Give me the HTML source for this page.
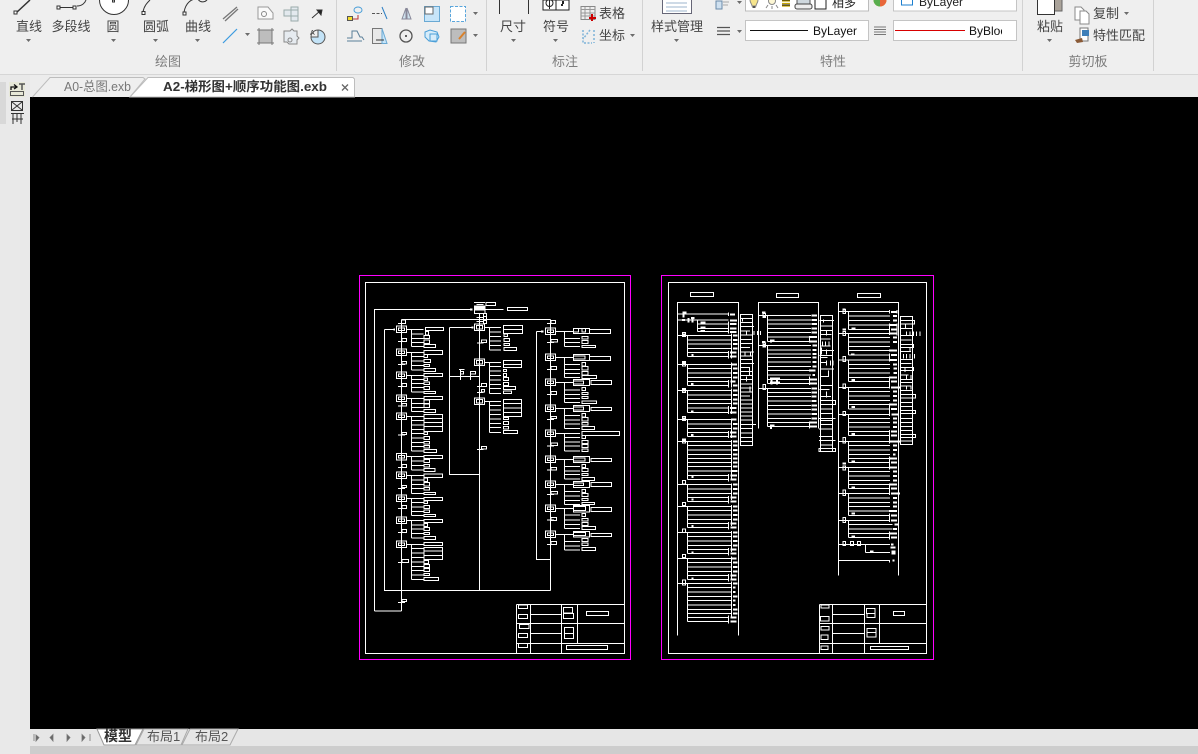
<!DOCTYPE html>
<html><head><meta charset="utf-8"><style>
html,body{margin:0;padding:0;width:1198px;height:754px;overflow:hidden;background:#efefef}
svg{position:absolute;left:0;top:0;display:block}
text{font-family:"Liberation Sans","Noto Sans CJK SC",sans-serif;font-size:13px;fill:#444}
.g{fill:#7d7d7d;text-anchor:middle}.m{text-anchor:middle}
.w path{fill:none;stroke:#fff;stroke-width:3;shape-rendering:crispEdges}
.w path.t{stroke-width:6}
</style></head><body>
<svg width="1198" height="754" viewBox="0 0 1198 754">
<rect width="1198" height="754" fill="#efefef"/>
<rect y="74" width="1198" height="1" fill="#d6d6d6"/>
<rect y="75" width="1198" height="22" fill="#ececec"/>
<rect x="0" y="75" width="30" height="679" fill="#e9e9e9"/>
<rect x="0" y="82" width="6" height="42" fill="#d8d8d8"/>
<rect x="30" y="97" width="1168" height="632" fill="#000"/>
<rect x="30" y="729" width="1168" height="17" fill="#e6e6e6"/>
<rect x="30" y="746" width="1168" height="8" fill="#cdcdcd"/>
<!-- separators -->
<path d="M336.5 0V71M486.5 0V71M642.5 0V71M1022.5 0V71M1153.5 0V71" stroke="#d2d2d2" fill="none"/>
<!-- ribbon labels -->
<text class="m" x="29" y="31">直线</text><text class="m" x="71" y="31">多段线</text><text class="m" x="113" y="31">圆</text><text class="m" x="156" y="31">圆弧</text><text class="m" x="198" y="31">曲线</text>
<text class="g" x="168" y="66">绘图</text><text class="g" x="412" y="66">修改</text><text class="g" x="565" y="66">标注</text><text class="g" x="833" y="66">特性</text><text class="g" x="1088" y="66">剪切板</text>
<text class="m" x="513" y="31">尺寸</text><text class="m" x="556" y="31">符号</text><text class="m" x="612" y="18">表格</text><text class="m" x="612" y="40">坐标</text>
<text class="m" x="677" y="31">样式管理</text><text class="m" x="1050" y="31">粘贴</text><text class="m" x="1106" y="18">复制</text><text class="m" x="1119" y="40">特性匹配</text>
<!-- dropdown arrows -->
<path fill="#555" d="M26 39h5l-2.500 3zM111 39h5l-2.500 3zM153 39h5l-2.500 3zM195 39h5l-2.500 3zM245 33h5l-2.500 3zM473 12h5l-2.500 3zM473 34h5l-2.500 3zM511 39h5l-2.500 3zM553 39h5l-2.500 3zM630 34h5l-2.500 3zM674 39h5l-2.500 3zM737 30h5l-2.500 3zM737 1h5l-2.500 3zM858 30h5l-2.500 3zM858 0h5l-2.500 3zM1006 30h5l-2.500 3zM1006 0h5l-2.500 3zM1047 39h5l-2.500 3zM1124 12h5l-2.500 3z" opacity=".85"/>
<!-- draw icons -->
<g fill="none" stroke="#333" stroke-width="1">
<path d="M16 13L30 0" stroke-width="1.500"/><rect x="14" y="11" width="3" height="3" fill="#fff"/>
<path d="M60 7.500H74M77 6C82 6 85 3 86 0"/><rect x="57" y="6" width="3" height="3" fill="#fff"/><rect x="73" y="6" width="3" height="3" fill="#fff"/>
<circle cx="114" cy="0" r="14.500" fill="#fff"/><rect x="112.500" y="0" width="2" height="2"/>
<path d="M143 12C144 6 147 3 150 0"/><rect x="142" y="11.500" width="3" height="3" fill="#fff"/>
<path d="M184 12C186 2 192 -1 196 -1M198 -1C200 3 206 3 208 -2"/><rect x="183" y="12" width="3" height="3" fill="#fff"/>
<path d="M223 19L237 7M225 21L238 9" stroke="#777" stroke-width="1.300"/>
<path d="M223 43L237 29" stroke="#3b9ae0" stroke-width="1.200"/>
<path d="M258 7H268L273 13V19H258Z" stroke="#999" fill="#fafafa"/><circle cx="264" cy="14" r="2.500" stroke="#888"/>
<path d="M284 10H298V16H284ZM291 7H298V21H291Z" stroke="#9aa" fill="#e3e9ee"/>
<path d="M312 18L320 11" stroke="#333"/><path d="M317 10L322 10L321 15Z" fill="#222"/>
<rect x="259" y="30" width="13" height="13" fill="#bdbdbd" stroke="#777"/><path d="M257 30H274M257 43H274M259 28V45M272 28V45" stroke="#777"/>
<path d="M284 31h6l2-2 2 2h3v5l2 2-2 2v4h-8l-2-2-3 0z" stroke="#888" fill="#e6ebf0"/><circle cx="290" cy="40" r="2" stroke="#888"/>
<path d="M318 30A7 7 0 1 1 311 37" stroke="#555" fill="#c3e3f7"/><path d="M311 37A7 7 0 0 1 318 30V37Z" fill="#efefef" stroke="#555"/>
</g>
<text x="310" y="35" style="font-size:7px">A</text>
<!-- modify icons -->
<g fill="none" stroke-width="1">
<rect x="347.500" y="16.500" width="5" height="4" fill="#f4dc2c" stroke="#555"/><ellipse cx="358" cy="10" rx="4" ry="3" stroke="#4b9fd8"/><path d="M353 19H358V15" stroke="#b33"/>
<path d="M372 13.500H382" stroke="#555" stroke-dasharray="3 1.500"/><path d="M382 7L387 19" stroke="#2d7fc4"/>
<path d="M402 19L406 8V19ZM407 8L411 19H407Z" stroke="#889" fill="#cfe2ee"/>
<rect x="424.500" y="6.500" width="15" height="15" stroke="#6aa9d3" fill="#c7e5f9"/><rect x="425" y="7" width="8" height="7" fill="#fff" stroke="#666"/>
<rect x="450.500" y="6.500" width="15" height="15" stroke="#5aa6dc" fill="#fff" stroke-dasharray="3 1.500"/>
<path d="M347 41H362M347 38H352V31H357L360 37H362L364 40" stroke="#5a7f99"/>
<path d="M372.500 28.500H382V43.500H372.500Z" stroke="#777" fill="#e8e8e8"/><path d="M382 28.500L387 43.500H382Z" stroke="#6aa9d3" fill="#c7e5f9"/><path d="M376 40H384" stroke="#333"/>
<circle cx="406" cy="36" r="6" stroke="#555" stroke-width="1.300"/><circle cx="406" cy="36" r="1" fill="#333"/>
<path d="M425 32L430 30L437 32L439 37L436 42L429 41L425 37Z" stroke="#4b9fd8" fill="#d6ecfa"/><rect x="430" y="34" width="7" height="7" stroke="#4b9fd8"/>
<rect x="451" y="29" width="15" height="14" fill="#bdbdbd" stroke="#777"/><path d="M459 39L465 32" stroke="#d9812b" stroke-width="2"/>
<!-- dim -->
<path d="M499.500 0V14M528.500 0V14" stroke="#333"/>
<rect x="543" y="0" width="13" height="10" stroke="#222" fill="#fff"/><circle cx="549.500" cy="3" r="3.500" stroke="#222"/><path d="M549.500 0V9" stroke="#222"/>
<rect x="556" y="0" width="13" height="10" stroke="#222" fill="#fff"/><path d="M561 5h2M563 1v3" stroke="#222" stroke-width="2"/>
<rect x="581" y="6.500" width="14" height="13" fill="#eee" stroke="#888"/><path d="M581 9.500H595M581 13H595M581 16H595M585 7V19M590 7V19" stroke="#999"/><path d="M592 14V21M589 18H596" stroke="#c00" stroke-width="2"/>
<path d="M583 30V43H592M590 30L583 39" stroke="#7fb3d8" stroke-dasharray="2 1.500" stroke-width="1.500"/><path d="M594 30V43" stroke="#7fb3d8" stroke-dasharray="2 2" stroke-width="1.500"/>
<!-- style -->
<rect x="662.500" y="-2" width="29" height="15.500" stroke="#667" fill="#fff"/><path d="M666 3H687M666 7H687M666 11H687" stroke="#9db4cc"/>
<!-- props -->
<rect x="716" y="1" width="6" height="8" stroke="#6a8aa8" fill="#cfe0ef"/><path d="M723 2H729M723 5H728" stroke="#aaa"/>
<rect x="745.500" y="-2" width="123" height="13" fill="#fff" stroke="#bcbcbc"/>
<path d="M750 0A4 4 0 0 1 758 0C758 3 756 4 756 6H752C752 4 750 3 750 0Z" stroke="#888" fill="#f6e58d"/><rect x="752.500" y="6" width="3" height="2" fill="#555"/>
<circle cx="772" cy="1" r="3.500" stroke="#888" fill="#fdf7d4"/><path d="M766 8L768 5M778 8L776 5M772 6V9" stroke="#888"/>
<path d="M782 1H790M782 3.500H790M782 6H790" stroke="#c7a600" stroke-width="1.300"/><path d="M782 0H790M782 5H790" stroke="#111"/>
<rect x="797" y="-1" width="13" height="7" stroke="#555" fill="#cfd8de"/><rect x="795" y="4" width="17" height="5" rx="2" stroke="#444" fill="#eee"/>
<rect x="815" y="-2" width="11" height="11" stroke="#222" fill="#fff"/>
<path d="M717 27.500H730M717 31H730M717 34.500H730" stroke="#555" stroke-width="1.200"/>
<rect x="745.500" y="20.500" width="123" height="20" fill="#fff" stroke="#c4c4c4"/><path d="M750 30.500H808" stroke="#111"/>
<path d="M874 27H886M874 29.500H886M874 32H886M874 34.500H886" stroke="#777"/>
<rect x="893.500" y="-2" width="123" height="13" fill="#fff" stroke="#c4c4c4"/><rect x="901.500" y="-1" width="11" height="6" stroke="#1c7fcf"/>
<rect x="893.500" y="20.500" width="123" height="20" fill="#fff" stroke="#c4c4c4"/><path d="M895 30.500H965" stroke="#d80000"/>
<circle cx="880" cy="0" r="6.500" fill="#e8c52a"/><path d="M880 0H873.500A6.500 6.500 0 0 0 880 6.500Z" fill="#58ad4d"/><path d="M880 0V6.500A6.500 6.500 0 0 0 886.500 0Z" fill="#e8663a"/>
<!-- clipboard -->
<rect x="1054" y="-2" width="8" height="13" fill="#aaa39a" stroke="#666"/><rect x="1037.500" y="-2" width="17" height="16.500" fill="#fff" stroke="#333"/>
<path d="M1075 7H1081L1084 10V20H1075Z" stroke="#888" fill="#fff"/><path d="M1080 11H1086L1089 14V24H1080Z" stroke="#888" fill="#fff"/>
<rect x="1080" y="28" width="8" height="13" fill="#fff" stroke="#777"/><rect x="1082" y="30" width="7" height="6" fill="#3f7fb8"/><path d="M1075 40L1082 38L1083 42L1077 43Z" fill="#8a5a36"/>
</g>
<text x="813" y="35" style="font-size:12px;fill:#111">ByLayer</text>
<svg x="968" y="22" width="34" height="18"><text x="1" y="13" style="font-size:12px;fill:#111">ByBlock</text></svg>
<text x="919" y="6" style="font-size:12px;fill:#222">ByLayer</text>
<text x="832" y="7" style="font-size:12px;fill:#222">相多</text>
<!-- doc tabs -->
<path d="M32.500 97L50 77.500H143L145 79L130 97" fill="#efefef" stroke="#bdbdbd"/>
<path d="M130 97L148 77.500H353L354.500 79V97Z" fill="#fff" stroke="#bdbdbd"/>
<text x="64" y="91" textLength="67" lengthAdjust="spacingAndGlyphs" style="fill:#777">A0-总图.exb</text>
<text x="163" y="91" textLength="164" lengthAdjust="spacingAndGlyphs" style="fill:#333;font-weight:bold">A2-梯形图+顺序功能图.exb</text>
<path d="M342 84.500L348 90.500M348 84.500L342 90.500" stroke="#666" stroke-width="1.300"/>
<!-- sidebar -->
<g fill="none" stroke="#333" stroke-width="1">
<rect x="9" y="82" width="16" height="15" fill="#e7e8d8" stroke="none"/>
<path d="M11 90V87H16M14 84.500L17 87L14 89" stroke="#111" stroke-width="1.300"/><path d="M19 84H25M22 84V90" stroke="#555" stroke-width="1.500"/><rect x="10.500" y="91.500" width="13" height="4" stroke="#555"/>
<rect x="11.500" y="101.500" width="11" height="9"/><path d="M12 110L22 102M12 102L22 110"/>
<path d="M11 113.500H24M13 114V124M17 114V122M21 114V124M12 119H23"/>
</g>
<!-- bottom tabs -->
<path d="M34 734V741M39 737.500L36 735V741ZM53 734.500L50 737.500L53 741ZM67 734.500L70 737.500L67 741ZM82 734.500L85 737.500L82 741ZM90 734V741" fill="#666" stroke="#777" stroke-width=".8"/>
<path d="M97 729L104 745H135L143 729Z" fill="#fff" stroke="#999"/>
<path d="M136 745L144 729H188L181 745ZM182 745L190 729H238L230 745Z" fill="#e6e6e6" stroke="#aaa"/>
<text x="104" y="741" style="font-size:14px;font-weight:bold;fill:#333">模型</text>
<text x="147" y="741" style="fill:#555">布局1</text><text x="195" y="741" style="fill:#555">布局2</text>
<!-- LEFT SHEET -->
<g class="w" transform="translate(355 270) scale(.33333)">
<path d="M13 16H827V1168H13Z" style="stroke:#f0f" />
<path d="M31 38H808V1151H31Z"/>
<path d="M58 1023V118H345M58 1023H140M88 178V961H586M140 148V1023M140 148H586M373 130V961M586 148V961M283 172V613H373M283 172H350M283 320H373M544 184V868H586M544 184H560M88 178H115M390 118H445M357 97H390M365 104H385M365 130H385M365 142H385M365 155H385"/>
<path d="M393 97H422V107H393ZM457 112H518V122H457ZM385 130H395V140H385ZM385 140H395V150H385ZM385 152H395V160H385ZM312 298H329M316 300V330M316 304H326V312H316ZM346 304V330M346 304H362V312H346Z"/>
<path class="t" d="M345 119H352M115 178H120M349 172H356M558 184H566M358 118H388M358 112H388"/>
<path d="M358 108H390V130H358Z"/>
<!-- left steps -->
<path d="M124 168H155V188H124ZM131 174H149V182H131ZM124 237H155V257H124ZM131 243H149V251H131ZM124 306H155V326H124ZM131 312H149V320H131ZM124 375H155V395H124ZM131 381H149V389H131ZM124 429H155V449H124ZM131 435H149V443H131ZM124 550H155V570H124ZM131 556H149V564H131ZM124 606H155V626H124ZM131 612H149V620H131ZM124 675H155V695H124ZM131 681H149V689H131ZM124 741H155V761H124ZM131 747H149V755H131ZM124 813H155V833H124ZM131 819H149V827H131Z"/>
<path d="M129 160H150M140 150H152V160H140ZM129 214H150M141 206H155V215H141ZM129 283H150M141 274H155V282H141ZM129 349H150M141 340H155V350H141ZM129 408H150M141 400H155V408H141ZM129 495H150M141 487H155V494H141ZM129 592H150M141 583H155V593H141ZM129 655H150M141 646H155V653H141ZM129 715H150M141 706H155V716H141ZM129 787H150M141 778H155V788H141ZM129 877H150M141 868H161V878H141ZM129 997H150M141 988H155V995H141Z"/>
<!-- left rungs -->
<path d="M155 178H205M169 178V230M169 192H205M169 205H205M169 218H205M169 230H205M211 172H266V182H211ZM211 185H220V195H211ZM207 196H224V206H207ZM207 210H224V220H207ZM207 224H242V233H207Z"/>
<path d="M155 247H205M169 247V300M169 260H205M169 273H205M169 287H205M169 300H205M207 241H263V254H207ZM207 254H218V263H207ZM207 268H227V277H207ZM207 283H224V290H207ZM207 295H242V304H207Z"/>
<path d="M155 316H205M169 316V366M169 328H205M169 340H205M169 353H205M169 366H205M207 310H263V320H207ZM207 324H218V332H207ZM207 336H224V344H207ZM207 349H224V359H207ZM207 364H242V371H207Z"/>
<path d="M155 385H205M169 385V425M169 400H205M169 413H205M169 425H205M207 379H263V389H207ZM207 390H224V400H207ZM207 402H224V413H207ZM207 418H242V428H207Z"/>
<path d="M155 439H205M169 439V543M169 452H205M169 465H205M169 478H205M169 490H205M169 504H205M169 517H205M169 530H205M169 543H205M207 433H263V485H207ZM207 445H263M207 458H263M207 470H263M207 486H218V494H207ZM207 499H224V509H207ZM207 514H224V522H207ZM207 526H224V534H207ZM207 538H245V548H207Z"/>
<path d="M155 560H205M169 560V600M169 573H205M169 587H205M169 600H205M207 556H263V566H207ZM207 569H224V577H207ZM207 583H224V591H207ZM207 595H240V605H207Z"/>
<path d="M155 616H205M169 616V670M169 630H205M169 643H205M169 656H205M169 670H205M207 612H263V623H207ZM207 624H218V635H207ZM207 637H224V648H207ZM207 652H224V660H207ZM207 667H242V674H207Z"/>
<path d="M155 685H205M169 685V737M169 697H205M169 711H205M169 724H205M169 737H205M207 682H263V692H207ZM207 693H218V701H207ZM207 706H224V716H207ZM207 720H224V728H207ZM207 733H242V740H207Z"/>
<path d="M155 751H205M169 751V804M169 765H205M169 777H205M169 790H205M169 804H205M207 748H263V758H207ZM207 760H218V770H207ZM207 772H224V782H207ZM207 787H224V794H207ZM207 799H242V809H207Z"/>
<path d="M155 823H205M169 823V929M169 836H205M169 849H205M169 862H205M169 876H205M169 889H205M169 902H205M169 915H205M169 929H205M207 817H263V827H207ZM207 832H263V869H207ZM207 843H263M207 856H263M207 871H220V881H207ZM207 883H224V893H207ZM207 895H224V905H207ZM207 910H224V917H207ZM207 922H251V932H207Z"/>
<!-- middle -->
<path d="M358 162H389V182H358ZM365 166H382V177H365ZM358 267H389V287H358ZM365 271H382V282H365ZM358 384H389V404H358ZM365 389H382V399H365Z"/>
<path d="M366 219H385M379 210H395V218H379ZM366 349H385M379 340H395V350H379ZM366 367H385M379 358H389V366H379ZM366 538H385M379 529H395V537H379Z"/>
<path d="M389 172H438M403 172V240M403 186H438M403 200H438M403 213H438M403 226H438M403 240H438M445 166H503V191H445ZM445 178H503M447 192H458V200H447ZM447 205H464V215H447ZM447 220H464V227H447ZM447 232H485V242H447Z"/>
<path d="M389 277H438M403 277V371M403 290H438M403 303H438M403 316H438M403 330H438M403 343H438M403 356H438M403 371H438M445 271H500V293H445ZM445 283H500M445 298H455V305H445ZM445 310H455V320H445ZM445 322H461V332H445ZM445 337H461V347H445ZM445 349H482V359H445ZM445 363H470V371H445Z"/>
<path d="M389 394H438M403 394V488M403 407H438M403 420H438M403 434H438M403 447H438M403 460H438M403 473H438M403 488H438M445 388H500V440H445ZM445 401H500M445 414H500M445 427H500M445 442H461V449H445ZM445 454H461V464H445ZM445 469H461V477H445ZM445 481H488V491H445Z"/>
<!-- right -->
<path d="M571 174H602V194H571ZM577 180H596V188H577ZM571 252H602V272H571ZM577 258H596V266H577ZM571 327H602V347H571ZM577 333H596V341H577ZM571 405H602V425H571ZM577 411H596V419H577ZM571 480H602V500H571ZM577 486H596V494H577ZM571 558H602V578H571ZM577 564H596V572H577ZM571 633H602V653H571ZM577 639H596V647H577ZM571 705H602V725H571ZM577 711H596V719H577ZM571 783H602V803H571ZM577 789H596V797H577Z"/>
<path d="M576 161H597M588 151H602V161H588ZM576 217H597M588 208H608V216H588ZM576 299H597M588 289H605V299H588ZM576 373H597M588 364H605V374H588ZM576 449H597M588 439H605V445H588ZM576 528H597M588 519H608V527H588ZM576 600H597M588 592H605V600H588ZM576 673H597M588 664H608V672H588ZM576 750H597M588 742H605V752H588ZM576 824H597M588 814H605V824H588Z"/>
<path d="M602 184H655M628 184V230M628 205H675M628 217H675M628 230H675M655 175H704V191H655ZM655 176H671V186H655ZM681 176H692V186H681ZM704 178H767V191H704ZM681 199H699V207H681ZM681 211H699V221H681ZM681 226H722V233H681Z"/>
<path d="M602 262H655M628 262V322M628 284H675M628 298H675M628 310H675M628 322H675M655 253H704V272H655ZM655 258H690V267H655ZM704 259H767V272H704ZM681 278H692V288H681ZM681 290H699V300H681ZM681 305H699V315H681ZM681 317H725V326H681Z"/>
<path d="M602 337H655M628 337V397M628 360H675M628 373H675M628 385H675M628 397H675M655 328H704V347H655ZM655 333H686V342H655ZM708 331H770V344H708ZM681 352H692V362H681ZM681 367H699V374H681ZM681 379H699V386H681ZM681 393H725V401H681Z"/>
<path d="M602 415H655M628 415V475M628 437H675M628 450H675M628 462H675M628 475H675M655 406H704V425H655ZM655 411H686V420H655ZM708 412H770V422H708ZM681 431H692V441H681ZM681 443H699V453H681ZM681 457H699V465H681ZM681 469H719V479H681Z"/>
<path d="M602 490H675M628 490V543M628 503H675M628 516H675M628 528H675M628 543H675M681 484H794V497H681ZM681 497H692V506H681ZM681 511H699V521H681ZM681 523H699V533H681ZM681 537H699V545H681Z"/>
<path d="M602 568H655M628 568V627M628 590H675M628 603H675M628 614H675M628 627H675M655 559H704V578H655ZM655 564H690V573H655ZM708 565H770V575H708ZM681 583H692V593H681ZM681 595H699V605H681ZM681 610H699V617H681ZM681 623H719V632H681Z"/>
<path d="M602 643H655M628 643V703M628 665H675M628 678H675M628 691H675M628 703H675M655 634H704V653H655ZM655 639H686V647H655ZM708 637H770V650H708ZM681 658H692V668H681ZM681 670H699V680H681ZM681 685H699V692H681ZM681 697H719V704H681Z"/>
<path d="M602 715H655M628 715V775M628 735H675M628 750H675M628 763H675M628 775H675M655 707H704V726H655ZM655 710H692V722H655ZM708 712H770V725H708ZM681 730H692V740H681ZM681 745H699V753H681ZM681 757H699V767H681ZM681 769H722V779H681Z"/>
<path d="M602 793H655M628 793V840M628 815H675M628 828H675M628 840H675M655 784H704V801H655ZM655 788H692V796H655ZM708 790H770V800H708ZM681 805H699V815H681ZM681 819H699V827H681ZM681 832H722V842H681Z"/>
<!-- title -->
<path d="M485 1003H808M485 1003V1151M485 1060H808M485 1120H808M527 1003V1151M620 1003V1151M667 1003V1120M527 1033H620M527 1090H620M490 1005H518V1016H490ZM490 1034H518V1046H490ZM493 1063H522V1076H493ZM490 1090H518V1103H490ZM490 1121H518V1133H490ZM625 1013H653V1029H625ZM625 1030H656V1046H625ZM628 1073H656V1090H628ZM628 1090H656V1106H628ZM694 1024H761V1037H694ZM634 1126H758V1139H634Z"/>
</g>
<!-- RIGHT SHEET -->
<g class="w" transform="translate(655 270) scale(.33333)">
<path d="M19 16H835V1168H19Z" style="stroke:#f0f"/>
<path d="M40 38H814V1151H40Z"/>
<path d="M106 67H176V80H106ZM364 70H431V83H364ZM607 70H677V83H607Z"/>
<path d="M67 1097V97H250V1097M310 476V97H490V476M550 917V97H730V917"/>
<!-- col1 -->
<path d="M67 132H220M67 150H220M127 150V185M127 162H220M127 175H220M127 185H220M67 197H230M97 197V260M97 210H230M97 222H230M97 235H230M97 248H220M97 260H220M67 283H230M97 283V347M97 296H230M97 309H230M97 322H230M97 335H220M97 347H220M67 361H230M97 361V427M97 375H230M97 388H230M97 401H230M97 414H220M97 427H220M67 449H230M97 449V499M97 462H230M97 475H230M97 488H220M97 499H220M67 514H230M97 514V629M97 527H230M97 540H230M97 553H230M97 566H230M97 578H230M97 590H230M97 603H230M97 616H220M97 629H220M67 644H230M97 644V695M97 657H230M97 670H230M97 683H220M97 695H220M67 709H230M97 709V773M97 722H230M97 735H230M97 748H230M97 761H220M97 773H220M67 787H230M97 787V851M97 800H230M97 813H230M97 826H230M97 839H220M97 851H220M67 865H230M97 865V929M97 878H230M97 891H230M97 904H230M97 917H220M97 929H220M67 940H230M97 940V1054M97 953H230M97 966H230M97 979H230M97 992H230M97 1005H230M97 1018H230M97 1031H230M97 1042H220M97 1054H220"/>
<path class="t" d="M225 134H240M225 152H246M225 162H244M225 175H244M225 186H244M234 197H248M234 210H248M234 222H248M234 235H248M225 248H244M225 260H244M230 283H246M234 296H248M234 309H248M234 322H248M226 335H242M234 347H248M234 361H248M234 375H248M234 388H248M234 401H248M225 414H244M225 427H244M230 449H244M234 462H248M234 475H248M225 488H244M225 499H244M234 514H248M234 527H248M234 540H248M234 553H248M234 566H248M234 578H248M234 590H248M230 603H248M226 616H246M226 629H244M234 644H248M234 657H248M234 670H248M226 683H244M226 695H244M234 709H248M234 722H248M234 735H248M234 748H248M226 761H244M226 773H244M234 787H248M234 800H248M234 813H248M234 826H248M226 839H244M226 851H244M230 865H244M234 878H248M234 891H248M234 904H248M226 917H244M226 929H244M234 940H248M234 953H242M234 966H242M234 979H248M234 992H242M234 1005H242M234 1018H248M234 1031H248M226 1042H244M226 1054H244M82 127H94M86 134V142M81 150H90M100 144V158M112 144V158M108 144H118M136 158H152M136 172H152M136 183H150M87 190V198M87 276V284M87 357V364M87 442V448M87 507V514M110 255H116M108 342H116M108 424H116M108 495H116M110 621H116M110 689H116M110 768H116M110 847H116M110 925H116"/>
<path d="M220 128V138M220 155V190M220 243V265M220 330V352M220 408V432M220 483V504M220 612V634M220 678V700M220 756V778M220 834V856M220 912V934M220 1037V1060M230 190V265M230 278V352M230 355V432M230 445V504M230 510V625M230 640V690M230 705V768M230 783V846M230 860V925M230 935V1040"/>
<path d="M82 187H92V200H82ZM82 275H92V288H82ZM82 355H92V368H82ZM82 440H92V452H82ZM82 507H92V519H82ZM82 632H92V642H82ZM82 697H92V707H82ZM82 777H92V787H82ZM82 853H92V863H82ZM82 930H92V945H82Z"/>
<path d="M256 133H293V527H256ZM256 145H293M256 157H293M256 170H297M256 183H285M256 195H293M256 208H289M256 220H293M256 233H285M256 246H297M256 258H293M256 268H293M256 280H297M256 292H285M256 304H293M256 316H293M256 329H293M256 342H293M256 354H289M256 366H293M256 378H285M256 390H293M256 402H293M256 414H293M256 426H293M256 438H293M256 450H293M256 463H303M256 476H293M256 489H293M256 502H293M256 515H293M275 183V195M297 183V195M308 183V195M317 183V195M287 245V258M262 145V155M270 245V258M284 292V316M275 320V335M285 350V366"/>
<!-- col2 -->
<path d="M310 136H468M337 136V214M337 150H468M337 162H468M337 175H468M337 188H468M337 201H468M337 214H468M310 226H468M337 226V341M337 240H468M337 252H468M337 263H468M337 276H468M337 289H468M337 302H468M337 315H468M337 328H468M337 341H468M310 355H468M337 355V470M337 367H468M337 380H468M337 393H468M337 406H468M337 419H468M337 432H468M337 445H468M337 458H468M337 470H468M463 198V218M463 320V345M463 455V476"/>
<path class="t" d="M470 136H486M470 150H486M470 162H486M470 175H486M470 188H486M463 201H486M463 214H486M472 226H486M472 240H484M472 252H484M472 263H484M472 276H484M472 289H484M462 302H482M472 315H480M465 328H486M465 341H486M470 355H486M470 367H486M470 380H484M470 393H484M470 406H486M470 419H486M470 432H486M470 445H486M465 458H486M465 470H486M321 216H331M328 222V230M321 128H331M328 135V142M345 212H358M348 218V216M345 325H375M345 338H375M349 322V344M366 322V344M345 466H358M348 470V477"/>
<path d="M324 131H332V143H324ZM324 219H332V231H324ZM324 343H332V359H324Z"/>
<path d="M496 136H533V545H496ZM493 152H537M496 168H533M496 181H533M496 194H530M496 207H526M496 228H526M496 241H537M493 257H533M496 263H518M496 277H514M496 297H537M496 320H522M496 346H533M493 358H524M496 380H528M496 392H542V404H496ZM496 417H533M496 430H533M492 445H542M496 452H533M496 464H533M492 477H533M492 499H533M492 512H542M496 525H533M492 535H542V545H492ZM505 148V158M515 180V196M502 215V228M512 215V228M522 215V228M515 272V286M526 272V286M534 272V286M520 302V320M500 232V254M515 238V254M515 365V382"/>
<!-- col3 -->
<path d="M550 124H705M580 124V178M580 138H705M580 152H705M580 165H705M580 178H705M550 190H705M580 190V255M580 203H705M580 216H705M580 229H705M580 242H705M580 255H705M550 270H705M580 270V335M580 283H705M580 296H705M580 309H705M580 322H705M580 335H705M550 352H705M580 352V417M580 365H705M580 378H705M580 391H705M580 404H705M580 417H705M550 433H705M580 433V497M580 445H705M580 458H705M580 471H705M580 484H705M580 497H705M550 514H705M580 514V578M580 527H705M580 540H705M580 553H705M580 566H705M580 578H705M550 670H705M580 592V655M550 592H705M580 605H705M580 618H705M580 631H705M580 644H705M580 655H705M580 670V737M580 684H705M580 697H705M580 710H705M580 723H705M580 737H705M550 751H705M580 751V802M580 764H712M580 777H712M580 790H705M580 802H705M550 823H705M631 823V847M631 847H705M550 871H705M703 120V130M703 160V195M703 250V275M703 320V355M703 400V438M703 480V520M703 560V598M703 640V675M703 730V756M703 785V808M703 870V878M726 120V130M726 160V196"/>
<path class="t" d="M708 126H726M714 138H726M714 152H726M702 165H726M708 178H726M702 190H726M714 203H726M714 216H726M702 242H726M708 255H726M702 270H726M714 283H726M716 296H726M716 309H726M702 322H726M708 335H726M708 352H735M714 365H726M714 378H726M714 391H726M702 404H726M708 417H726M710 433H730M714 445H726M714 458H726M714 471H726M708 484H726M708 497H726M702 514H735M714 527H726M714 540H726M714 553H722M702 566H726M708 578H726M702 592H726M714 605H726M714 618H726M714 631H726M702 644H726M708 655H726M708 670H735M714 684H726M714 697H726M714 710H726M702 723H726M708 737H726M708 751H726M718 764H730M714 777H726M702 790H726M708 802H726M708 823H716M706 833H722M712 847H720M712 871H718M562 118H572M590 175H602M588 253H598M590 330H600M590 411H600M590 492H600M590 575H600M590 652H600M590 730H600M590 800H600M645 845H656M563 179H573M563 580H573"/>
<path d="M564 118H572V131H564ZM564 185H572V197H564ZM564 260H572V275H564ZM564 342H572V356H564ZM564 424H572V437H564ZM564 503H572V519H564ZM564 588H572V600H564ZM564 660H572V677H564ZM564 742H572V758H564ZM564 815H572V827H564ZM586 815H596V827H586ZM607 815H616V827H607ZM711 843H720V852H711Z"/>
<path d="M736 140H773V523H736ZM736 152H779V162H736ZM736 175H773M736 196H773M736 210H770M736 223H776V233H736ZM736 245H768M736 268H773M736 280H770M736 292H776V302H736ZM736 315H760M736 328H773V338H736ZM736 348H770M736 362H773M736 373H782V384H736ZM736 397H773M736 410H773M736 421H782V431H736ZM736 445H773M736 458H773M736 470H773M736 482H773M736 493H782V503H736ZM736 513H773M755 185V198M765 185V198M775 185V198M785 185V198M795 185V198M745 252V266M755 252V266M765 252V266M778 252V266M755 315V328M768 315V328M755 346V358M768 346V358M752 160V175M765 232V246M750 292V306"/>
<!-- title -->
<path d="M493 1003H814M493 1003V1151M493 1060H814M493 1120H814M533 1003V1151M628 1003V1151M674 1003V1120M533 1033H628M533 1090H628M498 1005H522V1014H498ZM496 1039H522V1053H496ZM498 1069H522V1080H498ZM498 1095H519V1109H498ZM498 1128H519V1139H498ZM634 1015H660V1030H634ZM636 1030H660V1043H636ZM636 1075H663V1088H636ZM636 1088H663V1101H636ZM715 1024H749V1037H715ZM646 1129H761V1139H646Z"/>
</g>
</svg>
</body></html>
